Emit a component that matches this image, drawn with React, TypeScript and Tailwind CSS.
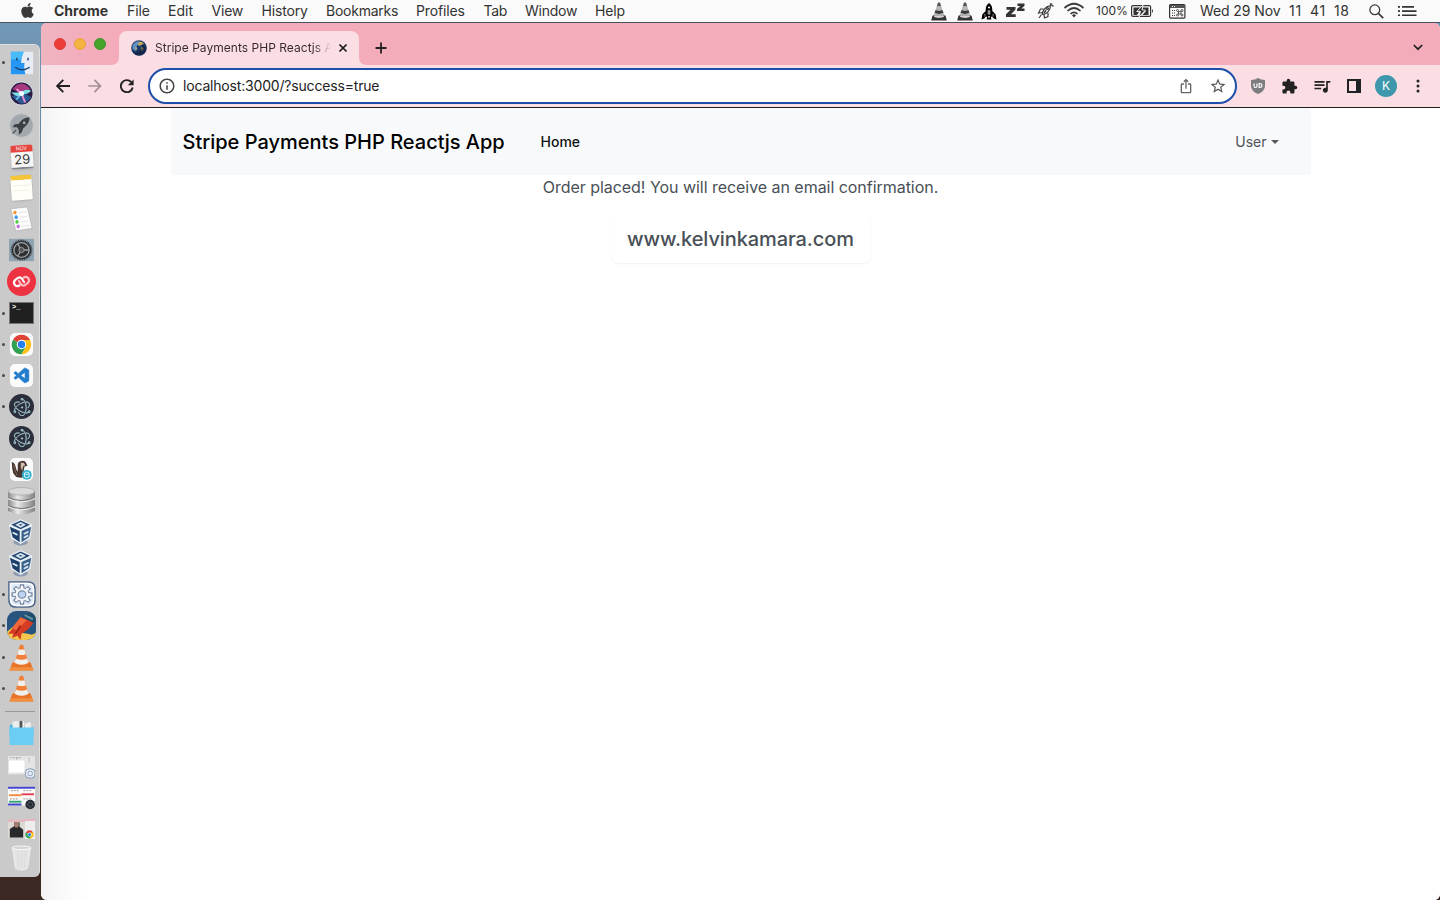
import type { ReactNode } from 'react';
import { FaApple } from 'react-icons/fa';
import { SiElectron } from 'react-icons/si';
import { VscVscode } from 'react-icons/vsc';
import {
  MdArrowForward, MdInfoOutline, MdIosShare, MdStarOutline,
  MdExtension, MdQueueMusic,
} from 'react-icons/md';

function MenuBar() {
  return (
    <header className="flex h-[23px] shrink-0 items-center border-b border-[#46525f] bg-[#fafafa] text-[14px] leading-[20px] text-[#333]">
      <div className="flex w-[54px] justify-center pb-px text-[#3a3a3a]"><FaApple size={17} /></div>
      <nav className="-mt-px flex items-center whitespace-nowrap">
        <span className="w-[73px] font-bold">Chrome</span>
        <span className="w-[41px] tracking-[-0.1px]">File</span>
        <span className="w-[43.500px]">Edit</span>
        <span className="w-[50px] tracking-[-0.2px]">View</span>
        <span className="w-[64.500px] tracking-[-0.15px]">History</span>
        <span className="w-[90px] tracking-[-0.25px]">Bookmarks</span>
        <span className="w-[67.500px] tracking-[-0.15px]">Profiles</span>
        <span className="w-[41.500px] tracking-[-0.3px]">Tab</span>
        <span className="w-[70px] tracking-[-0.25px]">Window</span>
        <span className="tracking-[-0.15px]">Help</span>
      </nav>
      <div className="-mt-px ml-auto flex items-center whitespace-nowrap">
        <MenuCone />
        <div className="w-[10px]" />
        <MenuCone />
        <svg className="ml-[8px] mt-px" width="16" height="17" viewBox="0 0 17 18">
          <path d="M8.500 0C6.200 1.500 5 4 5 7v1.500L1.500 12l-1 5.500 3-1 1.500-2h1.500L6 17.500h5l-.5-3H12l1.500 2 3 1-1-5.500L12 8.500V7c0-3-1.200-5.500-3.500-7z" fill="#000" />
          <circle cx="8.500" cy="4.800" r="1.100" fill="#fff" /><path d="M7.200 8h2.600v4H7.200z" fill="#fff" /><path d="M8 8.800h1v2.500H8z" /><path d="M7.500 14h2v1.500h-2z" fill="#fff" />
          <path d="M4.200 11.500v3M12.800 11.500v3" stroke="#fafafa" strokeWidth=".6" />
        </svg>
        <svg className="ml-[9px]" width="19" height="16" viewBox="0 0 19 16">
          <path d="M.5 4h9v2.500L5 11.200h4.700V14H0v-2.700L4.500 6.800H.5zM11.500.5h7v2.200L15.500 5.500h3V8H11V6l3.200-2.900h-2.700z" fill="#333" />
        </svg>
        <svg className="ml-[12px]" width="18" height="18" viewBox="0 0 18 18" fill="none" stroke="#3c3c3c" strokeWidth="1.200">
          <path d="M5.500 12.500C5 9 8 4.500 13.500 3.500c0 5-4 9-8 9zM6.500 7H3.500L1.500 11l4-.5M11 11v3.500L7.500 16l-.5-3.500M4.500 12.500L2 16M13.500 3.500l1.500-2M13 1.500l3.500 3" />
          <path d="M7 11L9 8" strokeWidth="1.500" /><circle cx="10.500" cy="6.500" r="1" />
        </svg>
        <svg className="ml-[8px]" width="22" height="17" viewBox="0 0 22 17" fill="none" stroke="#3a3a3a" strokeWidth="1.700">
          <path d="M1.500 6Q11-2.500 20.500 6M4.500 9Q11 3 17.500 9M7.500 12Q11 8.700 14.500 12" /><path d="M9 13.200q2-1.800 4 0L11 15.500z" fill="#333" stroke="none" />
        </svg>
        <span className="ml-[11px] w-[35px] text-[12px]">100%</span>
        <svg className="mt-px" width="23" height="14" viewBox="0 0 23 14">
          <rect x=".6" y="1.600" width="19" height="10.800" rx="1.500" fill="none" stroke="#333" strokeWidth="1.200" /><path d="M21 5q2 2 0 4z" fill="#333" />
          <path d="M2.500 3.500h7L5 8h3l-2 3H2.500zM12 3.500h5.500v7.500h-6L15 7h-4z" fill="#333" /><path d="M12 1L6 7.300h3.500L8 13l6.500-7H11z" fill="#333" stroke="#fafafa" strokeWidth=".8" />
        </svg>
        <svg className="ml-[15px] mt-px" width="17" height="15" viewBox="0 0 17 15">
          <rect x=".6" y=".6" width="15.300" height="13.500" rx="1" fill="none" stroke="#333" strokeWidth="1.200" /><path d="M1 1h15v3H1z" fill="#555" /><path d="M3 2h1v1H3zM5 2h1v1H5z" fill="#eee" />
          <path d="M3 6h1v1H3zM5 6h1v1H5zM3 8.500h1v1H3zM5 8.500h1v1H5zM3 11h1v1H3zM5 11h1v1H5z" fill="#333" />
          <path d="M9.500 7.500h2.500v2.500H9.500z" fill="none" stroke="#444" strokeWidth=".9" /><g fill="none" stroke="#444" strokeWidth=".9"><circle cx="8.500" cy="6.500" r="1" /><circle cx="13" cy="6.500" r="1" /><circle cx="8.500" cy="11" r="1" /><circle cx="13" cy="11" r="1" /></g>
        </svg>
        <span className="ml-[14px] w-[89px] tracking-[-0.1px]">Wed 29 Nov</span>
        <span className="w-[80px] tracking-[0.7px] [word-spacing:3.500px]">11 41 18</span>
        <svg className="mt-px" width="15" height="15" viewBox="0 0 15 15" fill="none" stroke="#3a3a3a" strokeWidth="1.300"><circle cx="5.800" cy="5.800" r="4.900" /><path d="M9.400 9.400L14.200 14.200" strokeWidth="1.700" /></svg>
        <svg className="mr-[23px] ml-[14px]" width="19" height="12" viewBox="0 0 19 12" fill="#333"><path d="M0 1h2v1.700H0zM4 1h12v1.700H4zM0 5.200h2v1.700H0zM4 5.200h14.500v1.700H4zM0 9.400h2v1.700H0zM4 9.400h14.500v1.700H4z" /></svg>
      </div>
    </header>
  );
}

function MenuCone() {
  return (
    <svg className="mt-[2px]" width="16" height="19" viewBox="0 0 16 19">
      <path d="M7 .5h2l1.300 4H5.700z" fill="#555" /><path d="M5.700 4.500h4.600L11.500 8q-3.500 1.500-7 0z" fill="#b5b5b5" /><path d="M4.500 8q3.500 1.500 7 0l1 3q-4.500 2-9 0z" fill="#3c3c3c" />
      <path d="M3.500 11q4.500 2 9 0l1.200 3.500H2.300z" fill="#b0b0b0" /><path d="M1.500 13.500h2L3 15q5 1.500 10 0l-.5-1.500h2l1.300 5H.2z" fill="#333" />
    </svg>
  );
}

function Globe() {
  return (
    <svg width="16" height="16" viewBox="0 0 16 16">
      <circle cx="8" cy="8" r="7.800" fill="#1c3a66" /><path d="M1.500 5l3-3 3-1 1 3-3 2 1 3-2 2-3-2z" fill="#6690c0" /><path d="M8 1.500l3 .5 2 2-3 1-1 1-2-1zM4 7l2 1-1 2zM10 7l3 1-1 2-2 1z" fill="#c4ab5c" />
      <path d="M11 4q3 1 4 4a7 7 0 0 1-6 7.500c-3 .2-5-1-6.500-3.500 5 1 9-2 8.500-8z" fill="#101a38" opacity=".6" />
    </svg>
  );
}

function DockItem({ running = false, children }: { running?: boolean; children: ReactNode }) {
  return (
    <div className="flex h-[31.300px] w-full shrink-0 items-center">
      <div className="flex w-[7px] shrink-0 justify-center">{running && <i className="size-[3px] rounded-full bg-[#484848]" />}</div>
      <div className="flex w-[29px] justify-center">{children}</div>
    </div>
  );
}

function Art({ children, w = 28, h = 28 }: { children: ReactNode; w?: number; h?: number }) {
  return <svg width={w} height={h} viewBox="0 0 28 28" preserveAspectRatio="none">{children}</svg>;
}

function Vlc() {
  return (
    <Art w={25} h={27}>
      <path d="M4 19h20l3.500 8.500H.5z" fill="#e8742a" /><path d="M2 24h24l1.500 3.500H.5z" fill="#f09040" />
      <path d="M12 1.500q2-2 4 0L22 20q-8 4-16 0z" fill="#f0803a" /><path d="M10.800 5.500q3.200 1 6.400 0l1.600 5q-4.800 2-9.600 0zM7.700 15q6.300 2.500 12.600 0l1.500 4.500q-7.800 4-15.600 0z" fill="#f0f0ee" />
    </Art>
  );
}

function VirtualBox() {
  return (
    <Art w={25} h={27}>
      <ellipse cx="13" cy="24" rx="8" ry="3.500" fill="#8d9bb0" /><path d="M0 6L13 0l13 6-2 14L13 26 2.500 20z" fill="#e9f1f7" />
      <path d="M2.500 6L13 1.500 23.500 6 13 10.500z" fill="#24466f" /><path d="M1 8l11 4.500v11.500L4 19z" fill="#1d3f6b" /><path d="M14 12.500L25 8l-2.500 11L14 24z" fill="#3a608b" />
      <path d="M4 14l5.500 2.500M16.500 15.500l5.500-2.500M16.500 19.500l5-2.500M9 6l4-2 4 2-4 2z" fill="none" stroke="#d9e8f3" strokeWidth="1.800" />
    </Art>
  );
}

function Electron() {
  return <div className="flex size-[25px] items-center justify-center rounded-full bg-[#2b2e3b] text-[#b4dde4]"><SiElectron size={18} stroke="#b4dde4" strokeWidth={0.5} /></div>;
}

function ChromeArt({ size = 22 }: { size?: number }) {
  return (
    <svg width={size} height={size} viewBox="0 0 28 28">
      <path d="M14 14L2.700 7.500A13 13 0 0 1 25.300 7.500z" fill="#df4335" /><path d="M14 14L2.700 7.500A13 13 0 0 0 14 27l6-10z" fill="#31a252" />
      <path d="M14 8h11.500A13 13 0 0 1 14 27l6-10z" fill="#fbc116" /><circle cx="14" cy="14" r="6.300" fill="#fff" /><circle cx="14" cy="14" r="4.900" fill="#2580ee" />
    </svg>
  );
}

const teeth = [0, 45, 90, 135, 180, 225, 270, 315];

function Gear() {
  return (
    <>
      <g fill="#f3f6fa" stroke="#73849c" strokeWidth="1.200">{teeth.map((a) => <path key={a} d="M12 8l.5-4h3l.5 4z" transform={`rotate(${a} 14 14)`} />)}</g>
      <circle cx="14" cy="14" r="7" fill="#f3f6fa" stroke="#73849c" />
      <g fill="#f3f6fa">{teeth.map((a) => <path key={a} d="M12.600 9.500V6h2.800v3.500z" transform={`rotate(${a} 14 14)`} />)}</g>
      <circle cx="14" cy="14" r="3.800" fill="#bcd4ef" stroke="#7a8da8" strokeWidth="1.200" />
    </>
  );
}

function Dock() {
  return (
    <aside className="mt-[21px] flex h-[833px] w-[40px] shrink-0 flex-col rounded-r-[6px] border-t border-r border-[#dedede] bg-[#cacaca] pt-[2px]">
      <DockItem running><Art w={24} h={24}>
        <path d="M1 1h26v26H1z" fill="#e8edf5" /><path d="M1 1h15c-2 4-3 8-3 13h4c-1 5 0 9 1 13H1z" fill="#2596f4" /><path d="M1 1h15l-3 9H1z" fill="#49bafa" />
        <path d="M8 8v3M21 8v3M6 19q8 6 17 0" stroke="#183f67" strokeWidth="1.600" fill="none" />
      </Art></DockItem>
      <DockItem><Art w={25} h={25}>
        <circle cx="14" cy="14" r="13" fill="#2a1d44" stroke="#d4d4da" strokeWidth="1.200" /><path d="M4 9Q14-3 24 9L14 14z" fill="#a8387f" /><path d="M3 17l11-4 11 5q-6 9-13 7z" fill="#2a5a94" />
        <path d="M2.500 13q7 0 11.500-1 6-4 11-1-4 4-9 4-6 5-13.500-2z" fill="#7be0e4" /><path d="M13.500 14l-5-5M14 14l4 10" stroke="#f08cd0" strokeWidth="2.200" /><path d="M14 14l-6 7" stroke="#6cc4e8" strokeWidth="2" /><circle cx="14" cy="14" r="2.800" fill="#f4ffff" />
      </Art></DockItem>
      <DockItem><Art w={25} h={25}>
        <circle cx="14" cy="14" r="13.200" fill="#a2a8ad" stroke="#c2c6c9" /><path d="M23 5c-5 0-9 2-12 7l-5 1-2 3 5 0 2 3 0 5 3-2 2-5c4-3 7-7 7-12z" fill="#3d4043" /><circle cx="17" cy="11" r="1.500" fill="#aeb3b7" /><path d="M4 23l4-4" stroke="#555" strokeWidth="1.500" />
      </Art></DockItem>
      <DockItem><div className="flex h-[24px] w-[22px] -rotate-4 flex-col rounded-[2px] border-b-2 border-[#85878a] bg-[#f7f7f7] text-center shadow-sm">
        <div className="h-[7px] rounded-t-[2px] bg-[#e54540] text-[5px] leading-[7px] text-white">NOV</div><div className="text-[13px] leading-[15px] text-[#333]">29</div>
      </div></DockItem>
      <DockItem><div className="h-[25px] w-[21px] -rotate-4 rounded-[1px] border-t-[5px] border-[#f4c53b] bg-[#fffef8] shadow-sm"><div className="mx-[2px] mt-[5px] h-[1px] bg-[#f5f0df]" /><div className="mx-[2px] mt-[4px] h-[1px] bg-[#f5f0df]" /></div></DockItem>
      <DockItem><Art w={23} h={26}>
        <path d="M1 3l20-2 6 23-20 3z" fill="#fcfcfc" stroke="#aaa" strokeWidth=".7" /><circle cx="6" cy="7" r="2" fill="#f19331" /><circle cx="7.500" cy="12" r="2" fill="#399ced" /><circle cx="8.500" cy="17" r="2" fill="#4cca42" /><circle cx="10" cy="22" r="2" fill="#c370df" />
        <path d="M11 7l9-1M12 12l9-1M13 17l9-1M14 22l10-1" stroke="#e2e2e2" />
      </Art></DockItem>
      <DockItem><Art w={25} h={24}>
        <path d="M0 1h28v26H0z" fill="#8fa4b2" /><circle cx="14" cy="14" r="11" fill="#2f3133" /><circle cx="14" cy="14" r="11.500" fill="none" stroke="#2f3133" strokeWidth="1.500" strokeDasharray="1 1" /><circle cx="14" cy="14" r="8.500" fill="none" stroke="#9da3a8" strokeWidth="1.500" /><path d="M14 14L9.500 6.500M14 14h8.500M14 14L9.500 21.500" stroke="#9da3a8" strokeWidth="1.500" /><circle cx="14" cy="14" r="3" fill="#555" stroke="#9da3a8" />
      </Art></DockItem>
      <DockItem><Art w={29} h={29}>
        <circle cx="14" cy="14" r="14" fill="#ed3342" />
        <g fill="none" strokeWidth="2.100" strokeLinecap="round" strokeLinejoin="round">
          <path d="M12 17.800Q9 19.500 7.200 16.800 5.800 14 8.300 12.200L11 10.300Q13 9.300 14.300 11.200L16.500 14.500" stroke="#ffbcc2" transform="rotate(180 14 14)" />
          <path d="M12 17.800Q9 19.500 7.200 16.800 5.800 14 8.300 12.200L11 10.300Q13 9.300 14.300 11.200L16.500 14.500" stroke="#fff" />
        </g>
      </Art></DockItem>
      <DockItem running><div className="h-[22px] w-[25px] border border-[#777] bg-[#202020] pl-[2px] font-mono text-[7px] leading-[9px] font-bold text-white">&gt;_</div></DockItem>
      <DockItem running><div className="flex size-[23px] items-center justify-center rounded-[5px] bg-[#fbfbfb]"><ChromeArt size={21} /></div></DockItem>
      <DockItem running><div className="flex size-[23px] items-center justify-center rounded-[5px] bg-[#fbfbfb] text-[#237ccc]"><VscVscode size={18} stroke="#237ccc" strokeWidth={0.7} /></div></DockItem>
      <DockItem running><Electron /></DockItem>
      <DockItem><Electron /></DockItem>
      <DockItem><div className="flex size-[23px] items-center justify-center rounded-[5px] bg-[#fbfbfb]"><Art w={21} h={21}>
        <path d="M1 4q4 1 5 6 1 5 3 7L9 8q0-5 5-5.500 5-.5 6 2.500l2 4-4 1-1 6 2 8-6 1-6-1-4-5Q1 12 1 4z" fill="#47352f" /><path d="M13 5l4 0 2 3-3 2-1 6-2-5z" fill="#d2c0ae" /><path d="M3 8l5 14" stroke="#8b7163" /><circle cx="21" cy="21" r="6.500" fill="#31afce" /><ellipse cx="21" cy="19" rx="3" ry="1.500" fill="none" stroke="#fff" /><path d="M18 19v5q3 2 6 0v-5" fill="none" stroke="#fff" />
      </Art></div></DockItem>
      <DockItem><Art w={27} h={28}>
        <linearGradient id="disk"><stop stopColor="#8a8a8a" /><stop offset=".35" stopColor="#e8e8e8" /><stop offset="1" stopColor="#828282" /></linearGradient>
        <g fill="url(#disk)"><path d="M0 20v4q14 7 28 0v-4z" /><path d="M0 12v6q14 6 28 0v-6z" /><path d="M0 4v6q14 6 28 0V4z" /></g>
        <path d="M0 10.500q14 6 28 0M0 18.500q14 6 28 0" stroke="#696969" fill="none" /><path d="M0 11.800q14 6 28 0M0 19.800q14 6 28 0" stroke="#eee" fill="none" /><ellipse cx="14" cy="4.300" rx="13.500" ry="3.800" fill="#d9d9d9" stroke="#b1b1b1" />
      </Art></DockItem>
      <DockItem><VirtualBox /></DockItem>
      <DockItem><VirtualBox /></DockItem>
      <DockItem running><Art w={28} h={27}>
        <path d="M1 1h19q7 0 7 7v12q0 7-7 7H8q-7 0-7-7z" fill="#dce8f6" stroke="#4e678a" strokeWidth="1.600" /><path d="M2.500 2.500h17q6 0 6 6v11q0 6-6 6H9q-6 0-6.500-6z" fill="none" stroke="#fff" strokeWidth="1.500" /><Gear />
      </Art></DockItem>
      <DockItem running><Art w={29} h={29}>
        <clipPath id="rocket-tile"><rect width="28" height="28" rx="9" /></clipPath>
        <g clipPath="url(#rocket-tile)"><path d="M0 0h28v28H0z" fill="#28557f" /><path d="M0 20l5-4 9 5 6 1 4 1 4-2v7H0z" fill="#f4c64d" /><path d="M13 6L26 11l-6 7-6 4-1 6-3-4-5 2 1-4-5 0 6-7z" fill="#d63b23" /><path d="M13 6l6 3L9 19l-4-3z" fill="#f2673b" /><path d="M15 5q6-5 12-1l1 4-2 4z" fill="#1f4a66" /><path d="M17 4l8 4" stroke="#5f93a9" strokeWidth="2" /><path d="M8 22l5-8" stroke="#9f2116" strokeWidth="1.500" /></g>
      </Art></DockItem>
      <DockItem running><Vlc /></DockItem>
      <DockItem running><Vlc /></DockItem>
      <div className="mx-[5px] mt-[7px] mb-[5px] h-px w-[30px] shrink-0 bg-[#999]" />
      <DockItem><Art w={25} h={26}>
        <path d="M1 5h6l2 3h18v19H1z" fill="#48b1dc" /><path d="M4 2l7-1v8H4zM13 1h4v8h-4zM18 4l6-2 1 7h-7z" fill="#eee" /><path d="M12 1h3v8h-3z" fill="#555" /><path d="M0 8h28l-1 19H1z" fill="#6bcdf4" />
      </Art></DockItem>
      <div className="h-[2.500px] shrink-0" />
      <DockItem><Art w={27} h={26}>
        <path d="M0 2h28v20H0z" fill="#e4e4e4" /><path d="M1 7h16v13H1z" fill="#fff" /><path d="M2 4h12M22 4v5M9 4v3" stroke="#aaa" strokeDasharray="2 1" /><rect x="18" y="16" width="10" height="10" rx="4" fill="#e7edf6" stroke="#7c90ab" /><circle cx="23" cy="21" r="2.500" fill="none" stroke="#8ba0bb" />
      </Art></DockItem>
      <DockItem><Art w={27} h={26}>
        <path d="M0 2h28v20H0z" fill="#f9f9f9" /><path d="M0 2h28v2H0zM0 20h14v2H0z" fill="#4547d2" /><path d="M3 6h8M16 6h8M2 15h9M16 15h9" stroke="#999" strokeDasharray="2 1" /><path d="M1 11h13" stroke="#f38c3a" strokeWidth="2" /><path d="M14 10h13" stroke="#e53950" strokeWidth="2" /><path d="M1 18h13" stroke="#32a66d" strokeWidth="2" /><circle cx="23" cy="21" r="5" fill="#272b34" /><circle cx="23" cy="21" r="2.500" fill="none" stroke="#68727e" strokeDasharray="2 1" />
      </Art></DockItem>
      <DockItem><div className="flex w-[27px] items-end"><Art w={17} h={20}>
        <path d="M0 2h28v24H0z" fill="#ddd9d4" /><path d="M3 26V14l7-4V5h9v6l6 4v11z" fill="#26282b" /><circle cx="14" cy="8" r="4" fill="#a57f6d" /><path d="M0 1h28v3H0z" fill="#e7b5bf" />
      </Art><div className="flex h-[20px] w-[10px] items-end border-t-2 border-[#e7b5bf] bg-[#eeeeee]"><ChromeArt size={9} /></div></div></DockItem>
      <div className="-mt-[2px] flex h-[31px] shrink-0 items-center justify-center pl-[3px]"><Art w={21} h={26}>
        <path d="M2 3h24l-4 22q-8 4-16 0z" fill="#e4e4e4" stroke="#f3f3f3" /><path d="M9 6l1 18M14 6v18M19 6l-1 18" stroke="#dadada" /><ellipse cx="14" cy="3" rx="12.500" ry="1.900" fill="#d3d3d3" stroke="#fff" />
      </Art></div>
    </aside>
  );
}

function TabStrip() {
  return (
    <div className="flex h-[42px] shrink-0 items-end bg-[#f4abba] bg-linear-to-r from-[#efb5c1] to-[#f4abba] to-[50px]">
      <div className="flex w-[70px] gap-[8px] self-center pl-[13px]">
        <i className="size-3 rounded-full border border-[#d93b37] bg-[#ed3d38]" /><i className="size-3 rounded-full border border-[#e2a23b] bg-[#f5b340]" /><i className="size-3 rounded-full border border-[#3c942b] bg-[#47a42b]" />
      </div>
      <svg width="8" height="8" viewBox="0 0 8 8"><path d="M8 0v8H0Q8 8 8 0z" fill="#fbdde4" /></svg>
      <div className="flex h-[34px] w-[240px] items-center rounded-t-[8px] bg-[#fbdde4] pl-[12px]">
        <Globe />
        <span className="ml-[8px] w-[176px] overflow-hidden bg-linear-to-r from-[#35292d] from-[90%] to-transparent bg-clip-text text-[12px] tracking-[0.03px] whitespace-nowrap text-transparent">Stripe Payments PHP Reactjs App</span>
        <svg className="ml-[8px]" width="8" height="8" viewBox="0 0 8 8"><path d="M.5.5l7 7M7.500.5l-7 7" stroke="#222" strokeWidth="1.600" /></svg>
      </div>
      <svg width="8" height="8" viewBox="0 0 8 8"><path d="M0 0v8h8Q0 8 0 0z" fill="#fbdde4" /></svg>
      <svg className="mb-[11px] ml-[8px]" width="12" height="12" viewBox="0 0 12 12"><path d="M6 .5v11M.5 6h11" stroke="#222" strokeWidth="1.800" /></svg>
      <svg className="mr-[17px] mb-[14px] ml-auto" width="10" height="7" viewBox="0 0 10 7" fill="none" stroke="#222" strokeWidth="1.700"><path d="M.8 1L5 5.200 9.200 1" /></svg>
    </div>
  );
}

function Toolbar() {
  return (
    <div className="flex h-[43px] shrink-0 items-center border-b border-[#202020] bg-linear-to-r from-[#f5dfe4] to-[#fbdde4] to-[50px] text-[#222]">
      <svg className="ml-[15px]" width="14" height="14" viewBox="0 0 14 14" fill="none" stroke="#222" strokeWidth="1.900"><path d="M14 7H1.500M7.300.9L1.200 7l6.100 6.100" /></svg>
      <MdArrowForward className="ml-[15px] text-[#a28f94]" size={20} />
      <svg className="ml-[15px]" width="14" height="14" viewBox="0 0 14 14"><path d="M11.300 3.100A6 6 0 1 0 12.700 8.500" fill="none" stroke="#222" strokeWidth="1.900" /><path d="M13.600.4v5.800H7.800z" fill="#222" /></svg>
      <div className="ml-[14px] flex h-[36px] w-[1089px] items-center rounded-full border-2 border-[#1c4fa8] bg-white">
        <MdInfoOutline className="ml-[8px] text-[#444]" size={18} />
        <span className="-mt-px ml-[7px] text-[14px] tracking-[-0.18px] text-[#222]">localhost:3000/?success=true</span>
        <MdIosShare className="ml-auto text-[#666]" size={16} />
        <MdStarOutline className="mr-[8px] ml-[15px] text-[#555]" size={18} />
      </div>
      <svg className="ml-[13px]" width="16" height="16" viewBox="0 0 16 16"><path d="M8 0q3 2 7 2v6q0 5-7 8-7-3-7-8V2q4 0 7-2z" fill="#7d7c80" /><path d="M4 5.500v2.200q0 1.800 1.500 1.800T7 7.700V5.500M9.200 5.500v4h.8q2-.2 2-2t-2-2z" fill="none" stroke="#fff" strokeWidth="1.200" /></svg>
      <MdExtension className="ml-[15px]" size={17} />
      <MdQueueMusic className="ml-[14px]" size={20} />
      <svg className="ml-[15px]" width="14" height="14" viewBox="0 0 14 14"><path d="M1 1h12v12H1z" fill="none" stroke="#202124" strokeWidth="2" /><path d="M9 1h5v12H9z" fill="#202124" /></svg>
      <div className="ml-[14px] flex size-[22px] items-center justify-center rounded-full bg-[#3c98aa] text-[12px] text-white">K</div>
      <svg className="ml-[19px]" width="4" height="14" viewBox="0 0 4 14" fill="#222"><circle cx="2" cy="2" r="1.500" /><circle cx="2" cy="7" r="1.500" /><circle cx="2" cy="12" r="1.500" /></svg>
    </div>
  );
}

function Page() {
  return (
    <main className="flex flex-1 flex-col items-center bg-linear-to-r from-[#f3f3f3] via-[#fafafa] via-[22px] to-white to-[50px]">
      <nav className="flex h-[67px] w-[1140px] items-center bg-[#f8f9fb] pl-[12px]">
        <span className="w-[358px] text-[20px] font-[450] text-black">Stripe Payments PHP Reactjs App</span>
        <span className="text-[14px] font-medium text-[#111]">Home</span>
        <span className="mr-[32px] ml-auto flex items-center gap-[4px] text-[14px] text-[#4f5257]">User<i className="border-x-4 border-t-4 border-x-transparent border-t-[#55585c]" /></span>
      </nav>
      <p className="h-[38px] text-[16px] leading-[25px] tracking-[-0.04px] text-[#495057]">Order placed! You will receive an email confirmation.</p>
      <div className="flex h-[50px] w-[260px] items-center justify-center rounded-[8px] pt-[2px] text-[20px] font-medium tracking-[-0.09px] text-[#495057] shadow-[0_1px_2px_rgba(0,0,0,0.06)]">www.kelvinkamara.com</div>
    </main>
  );
}

export default function App() {
  return (
    <div className="flex h-[900px] w-[1440px] flex-col overflow-hidden font-['Inter',sans-serif]">
      <MenuBar />
      <div className="flex min-h-0 flex-1 bg-linear-to-b from-[#7399b8] via-[#526878] via-[300px] to-[#3b2822] to-[780px]">
        <Dock />
        <section className="ml-px flex min-w-0 flex-1 flex-col overflow-hidden rounded-[6px] bg-white">
          <TabStrip />
          <Toolbar />
          <Page />
        </section>
      </div>
    </div>
  );
}
